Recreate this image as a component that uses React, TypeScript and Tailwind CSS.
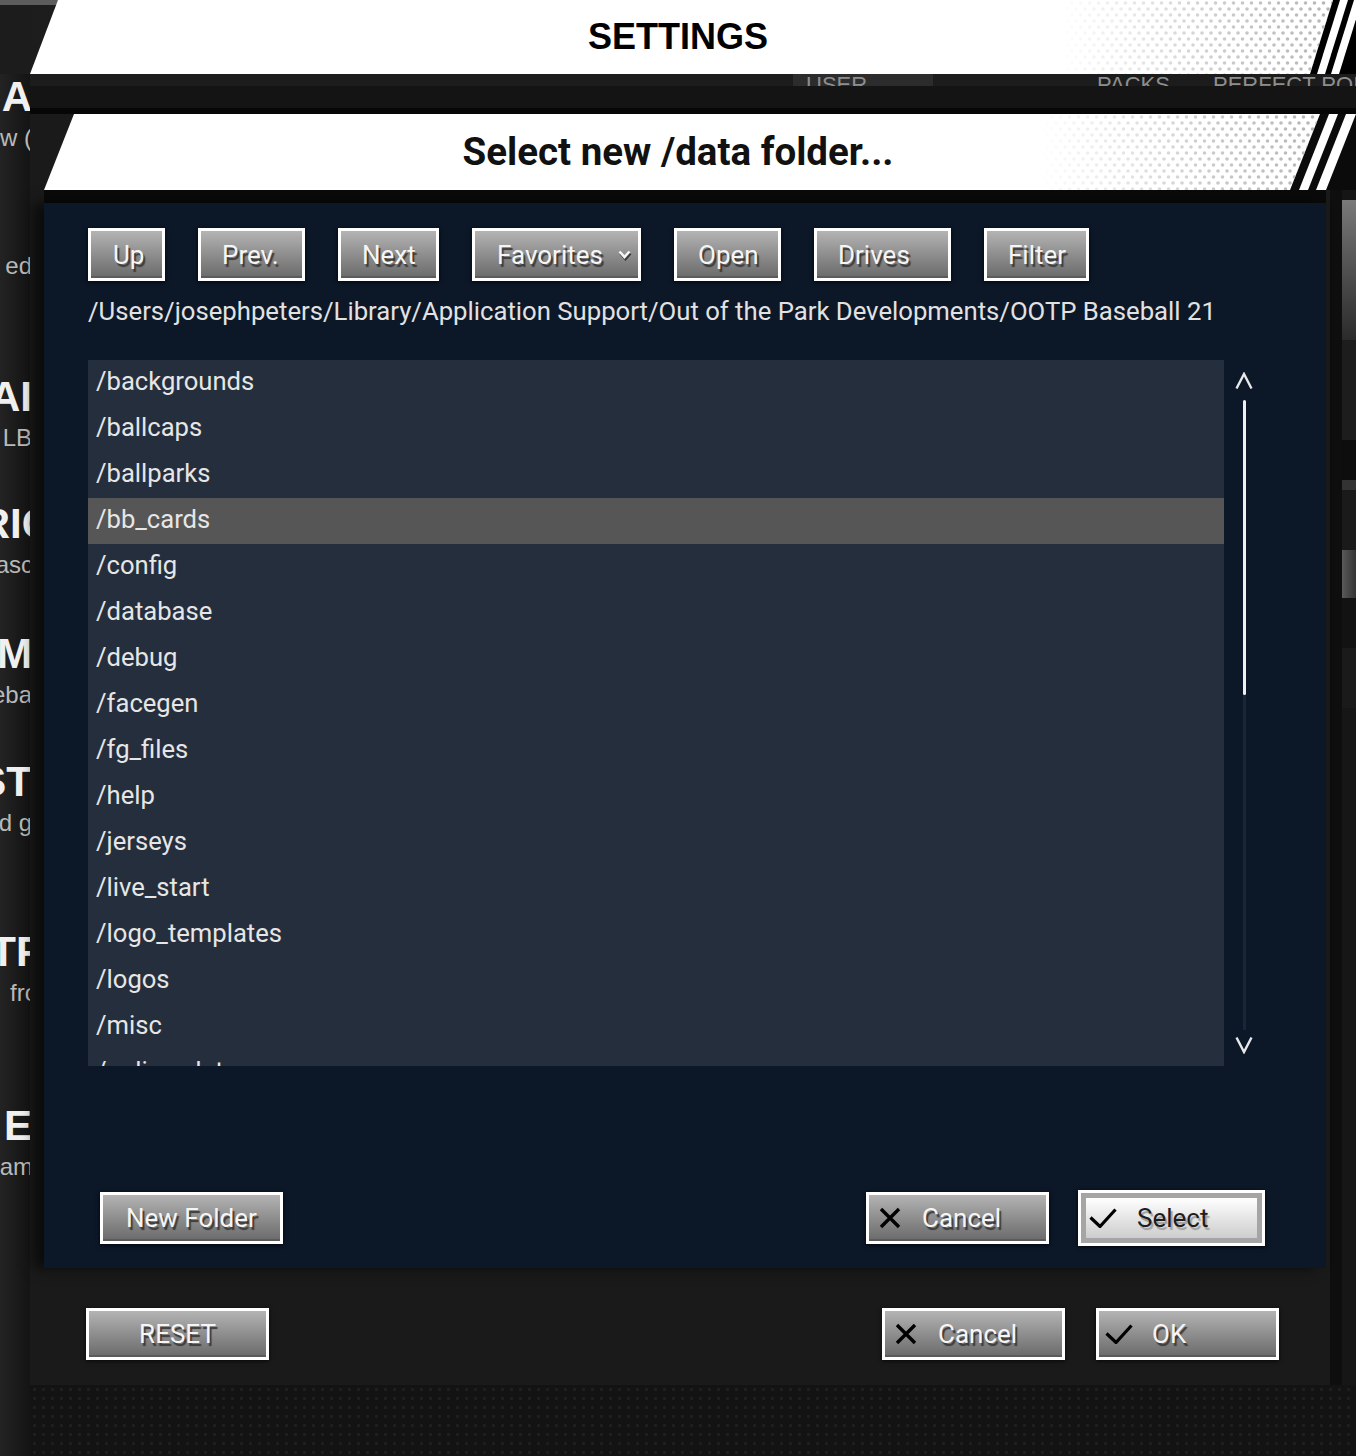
import type { ReactNode } from 'react';

const FOLDERS = [
  '/backgrounds',
  '/ballcaps',
  '/ballparks',
  '/bb_cards',
  '/config',
  '/database',
  '/debug',
  '/facegen',
  '/fg_files',
  '/help',
  '/jerseys',
  '/live_start',
  '/logo_templates',
  '/logos',
  '/misc',
  '/online_data',
];
const SELECTED = '/bb_cards';

// fragments of the settings page that peek out left of the dialog
const LEFT = [
  { mt: 'mt-[1px]', title: 'A', tmr: '-mr-[2px]', sub: 'w (', smr: '-mr-[2px]' },
  { mt: 'mt-[100px]', title: '', tmr: '', sub: 'ed', smr: '-mr-[2px]' },
  { mt: 'mt-[95px]', title: 'AI', tmr: '-mr-[2px]', sub: 'LB', smr: '-mr-[2px]' },
  { mt: 'mt-[50px]', title: 'RIC', tmr: '-mr-[22px]', sub: 'asc', smr: '-mr-[3px]' },
  { mt: 'mt-[53px]', title: 'M', tmr: '-mr-[2px]', sub: 'eba', smr: '-mr-[2px]' },
  { mt: 'mt-[51px]', title: 'ST', tmr: '-mr-[2px]', sub: 'd g', smr: '-mr-[2px]' },
  { mt: 'mt-[93px]', title: 'TP', tmr: '-mr-[14px]', sub: 'fro', smr: '-mr-[8px]' },
  { mt: 'mt-[97px]', title: 'E', tmr: '-mr-[2px]', sub: 'am', smr: '-mr-[3px]' },
];

function Halftone({ id, width, height }: { id: string; width: number; height: number }) {
  return (
    <svg width={width} height={height} className="block">
      <defs>
        <pattern id={`${id}-p`} width="9" height="12" patternUnits="userSpaceOnUse">
          <circle cx="2.5" cy="3" r="1.8" fill="#b3b3b3" />
          <circle cx="7" cy="9" r="1.8" fill="#b3b3b3" />
        </pattern>
        <linearGradient id={`${id}-g`} x1="0" x2="1" y1="0" y2="0">
          <stop offset="0" stopColor="#fff" stopOpacity="0" />
          <stop offset="0.6" stopColor="#fff" stopOpacity="0.7" />
          <stop offset="1" stopColor="#fff" stopOpacity="1" />
        </linearGradient>
        <mask id={`${id}-m`}>
          <rect width={width} height={height} fill={`url(#${id}-g)`} />
        </mask>
      </defs>
      <rect width={width} height={height} fill={`url(#${id}-p)`} mask={`url(#${id}-m)`} />
    </svg>
  );
}

function XMark() {
  return (
    <svg width="24" height="24" viewBox="0 0 24 24" className="shrink-0">
      <path d="M3 3L21 21M21 3L3 21" stroke="#000" strokeWidth="3.4" />
    </svg>
  );
}

function CheckMark() {
  return (
    <svg width="28" height="20" viewBox="0 0 28 20" className="shrink-0">
      <path d="M1.5 9.5L11 18.5L26.5 1.5" stroke="#000" strokeWidth="3.2" fill="none" />
    </svg>
  );
}

function GrayButton({ className = '', children }: { className?: string; children: ReactNode }) {
  return (
    <button
      type="button"
      className={`flex shrink-0 items-center border-[3px] border-white bg-linear-to-b from-[#b4b4b4] to-[#6a6a6a] font-['Roboto',sans-serif] text-[26px] leading-none text-[#f5f5f5] shadow-[inset_0_-2px_0_#5b5b5b,0_1px_4px_rgba(0,0,0,0.75)] [text-shadow:2px_3px_1px_#3b3b3b] ${className}`}
    >
      {children}
    </button>
  );
}

function Toolbar() {
  return (
    <div className="flex gap-[33px] pl-[44px]">
      <GrayButton className="h-[53px] w-[77px] pl-[22px]">Up</GrayButton>
      <GrayButton className="h-[53px] w-[107px] pl-[21px]">Prev.</GrayButton>
      <GrayButton className="h-[53px] w-[101px] pl-[21px]">Next</GrayButton>
      <GrayButton className="h-[53px] w-[169px] gap-[15px] pl-[22px]">
        Favorites
        <svg width="13" height="9" viewBox="0 0 13 9" className="[filter:drop-shadow(1px_2px_0_#3b3b3b)]">
          <path d="M1.5 1.5L6.5 7L11.5 1.5" stroke="#f5f5f5" strokeWidth="2.6" fill="none" />
        </svg>
      </GrayButton>
      <GrayButton className="h-[53px] w-[107px] pl-[21px]">Open</GrayButton>
      <GrayButton className="h-[53px] w-[137px] pl-[21px]">Drives</GrayButton>
      <GrayButton className="h-[53px] w-[105px] pl-[21px]">Filter</GrayButton>
    </div>
  );
}

function FolderList() {
  return (
    <div className="mt-[34px] flex pl-[44px]">
      <div className="h-[706px] w-[1136px] overflow-hidden bg-[#252e3d]">
        {FOLDERS.map((f) => (
          <div
            key={f}
            className={`flex h-[46px] items-center pb-[4px] pl-[8px] text-[25.6px] text-[#e6e6e6] ${f === SELECTED ? 'bg-[#565656]' : ''}`}
          >
            {f}
          </div>
        ))}
      </div>
      <div className="flex w-[40px] flex-col items-center pt-[12px]">
        <svg width="20" height="18" viewBox="0 0 20 18">
          <path d="M2.5 16.5L10 2L17.5 16.5" stroke="#e8e8e8" strokeWidth="2.4" fill="none" />
        </svg>
        <div className="mt-[10px] h-[630px] w-[3px] bg-[#1b2538]">
          <div className="h-[295px] w-full rounded-full bg-[#f0f0f0]" />
        </div>
        <svg width="20" height="18" viewBox="0 0 20 18" className="mt-[6px]">
          <path d="M2.5 1.5L10 16L17.5 1.5" stroke="#e8e8e8" strokeWidth="2.4" fill="none" />
        </svg>
      </div>
    </div>
  );
}

function Dialog() {
  return (
    <div className="absolute left-0 top-[114px] w-[1356px] font-['Roboto',sans-serif]">
      <div className="relative h-[76px]">
        <div className="absolute inset-0 bg-[#0b0b0b] [clip-path:polygon(1316px_0,1356px_0,1356px_100%,1288px_100%)]" />
        <div className="relative flex h-full items-center justify-center bg-white [clip-path:polygon(74px_0,1320px_0,1290px_100%,44px_100%)]">
          <div className="absolute left-[1040px] top-0">
            <Halftone id="dlg" width={290} height={76} />
          </div>
          <span className="relative text-[38.5px] font-bold text-[#111]">Select new /data folder...</span>
        </div>
        <div className="absolute inset-0 bg-white [clip-path:polygon(1329px_0,1338px_0,1308px_100%,1299px_100%)]" />
        <div className="absolute inset-0 bg-white [clip-path:polygon(1346px_0,1356px_0,1326px_100%,1316px_100%)]" />
      </div>
      <div className="ml-[44px] h-[13px] w-[1282px] bg-[#0a0a0a]" />
      <div className="ml-[44px] flex h-[1065px] w-[1282px] flex-col bg-[#0c1728] pt-[25px] shadow-[-10px_0_12px_rgba(0,0,0,0.6)]">
        <Toolbar />
        <div className="mt-[15px] whitespace-nowrap pl-[44px] text-[25.7px] leading-[30px] text-[#e2e2e2]">
          /Users/josephpeters/Library/Application Support/Out of the Park Developments/OOTP Baseball 21
        </div>
        <FolderList />
        <div className="mb-[22px] mt-auto flex items-center pl-[56px] pr-[61px]">
          <GrayButton className="h-[52px] w-[183px] pl-[23px]">New Folder</GrayButton>
          <GrayButton className="ml-auto h-[52px] w-[183px] gap-[20px] pl-[9px]">
            <XMark />
            Cancel
          </GrayButton>
          <button
            type="button"
            className="ml-[29px] flex h-[56px] w-[187px] items-center border-[3px] border-white shadow-[0_1px_4px_rgba(0,0,0,0.75)]"
          >
            <span className="flex h-full w-full items-center gap-[20px] border-[5px] border-[#a5a5a5] bg-linear-to-b from-white to-[#cdcdcd] pl-[3px] text-[26px] leading-none text-[#1d1d1d] [text-shadow:2px_3px_1px_#a0a0a0]">
              <CheckMark />
              Select
            </span>
          </button>
        </div>
      </div>
    </div>
  );
}

function LeftStrip() {
  return (
    <div className="flex w-[30px] shrink-0 flex-col overflow-hidden bg-linear-to-r from-[#232323] to-[#141414] font-['Liberation_Sans',Arial,sans-serif]">
      {LEFT.map((item, i) => (
        <div key={i} className={item.mt}>
          {item.title && (
            <div className="flex h-[44px] justify-end whitespace-nowrap text-[42px] font-bold leading-[44px] text-[#f0f0f0]">
              <span className={`shrink-0 ${item.tmr}`}>{item.title}</span>
            </div>
          )}
          <div
            className={`flex h-[28px] justify-end whitespace-nowrap text-[24px] leading-[28px] text-[#b9b9b9] ${item.title ? 'mt-[5px]' : ''}`}
          >
            <span className={`shrink-0 ${item.smr}`}>{item.sub}</span>
          </div>
        </div>
      ))}
    </div>
  );
}

function RightStrip() {
  return (
    <div className="flex w-[26px] shrink-0">
      <div className="w-[12px] bg-[#0e0e0e]" />
      <div className="flex w-[14px] flex-col">
        <div className="h-[86px] bg-[#151515]" />
        <div className="h-[140px] bg-linear-to-b from-[#7a7a7a] to-[#2b2b2b]" />
        <div className="h-[100px] bg-[#1d1d1d]" />
        <div className="h-[40px] bg-[#0d0d0d]" />
        <div className="h-[10px] bg-[#333]" />
        <div className="h-[60px] bg-[#1a1a1a]" />
        <div className="h-[48px] bg-linear-to-r from-[#5a5a5a] to-[#333]" />
        <div className="h-[50px] bg-[#121212]" />
        <div className="h-[60px] bg-[#1a1a1a]" />
        <div className="flex-1 bg-[#161616]" />
      </div>
    </div>
  );
}

export default function App() {
  return (
    <div className="relative h-[1456px] w-[1356px] overflow-hidden bg-[#131313] font-['Roboto',sans-serif]">
      {/* SETTINGS banner */}
      <div className="relative h-[74px] bg-linear-to-r from-[#1c1c1c] to-[#262626]">
        <div className="absolute left-0 top-0 h-[5px] w-[58px] bg-[#5c5c5c]" />
        <div className="absolute inset-0 bg-black [clip-path:polygon(1330px_0,1356px_0,1356px_100%,1308px_100%)]" />
        <div className="relative flex h-full items-center justify-center bg-white [clip-path:polygon(58px_0,1333px_0,1310px_100%,30px_100%)]">
          <div className="absolute left-[1060px] top-0">
            <Halftone id="set" width={280} height={74} />
          </div>
          <span className="relative font-['Liberation_Sans',Arial,sans-serif] text-[36px] font-bold text-black">
            SETTINGS
          </span>
        </div>
        <div className="absolute inset-0 bg-white [clip-path:polygon(1340px_0,1348px_0,1325px_100%,1317px_100%)]" />
        <div className="absolute inset-0 bg-white [clip-path:polygon(1354px_0,1362px_0,1339px_100%,1331px_100%)]" />
      </div>

      <div className="flex h-[1382px]">
        <LeftStrip />
        <div className="flex w-[1326px] flex-col">
          {/* tab bar, mostly hidden under the dialog */}
          <div className="flex h-[12px] items-start overflow-hidden bg-[#1c1c1c] font-['Liberation_Sans',Arial,sans-serif] text-[22px] leading-[22px] text-[#8e8e8e]">
            <div className="ml-[763px] flex h-full w-[140px] shrink-0 bg-[#2c2c2c] pl-[13px]">USER</div>
            <span className="ml-[164px] shrink-0">PACKS</span>
            <span className="ml-[43px] shrink-0 whitespace-nowrap">PERFECT POINTS</span>
          </div>
          <div className="h-[22px] bg-[#141414]" />
          <div className="h-[6px] bg-[#060606]" />
          <div className="flex h-[1271px]">
            <div className="flex w-[1300px] flex-col justify-end bg-[#1a1a1a] pb-[25px] pl-[56px] pr-[51px]">
              <div className="flex items-center">
                <GrayButton className="h-[52px] w-[183px] justify-center">RESET</GrayButton>
                <GrayButton className="ml-auto h-[52px] w-[183px] gap-[20px] pl-[9px]">
                  <XMark />
                  Cancel
                </GrayButton>
                <GrayButton className="ml-[31px] h-[52px] w-[183px] gap-[19px] pl-[6px]">
                  <CheckMark />
                  OK
                </GrayButton>
              </div>
            </div>
            <RightStrip />
          </div>
          <div className="flex-1 bg-[#131313] bg-[radial-gradient(circle,#1e1e1e_1.5px,transparent_1.7px)] bg-[length:9px_9px]" />
        </div>
      </div>

      <Dialog />
    </div>
  );
}
